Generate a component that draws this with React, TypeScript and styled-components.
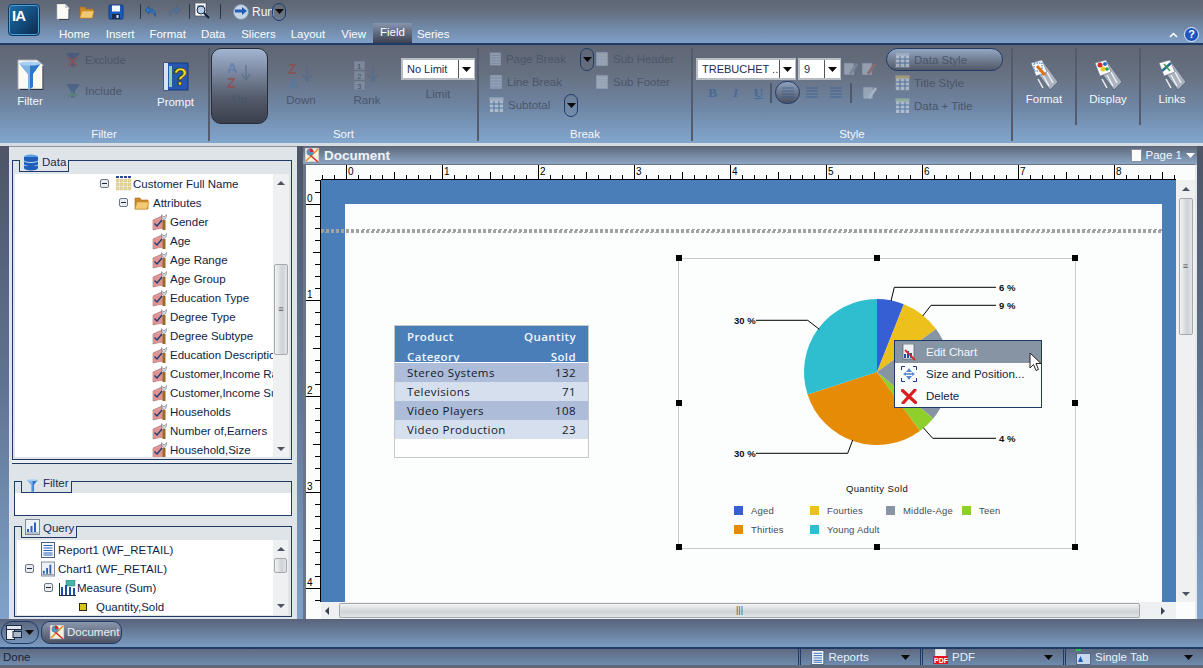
import React from 'react';
import styled, { createGlobalStyle } from 'styled-components';

const NAVY = '#1f3a66';
const UI_FONT = '"Liberation Sans", Arial, sans-serif';

const GlobalStyle = createGlobalStyle`
  html, body { margin: 0; padding: 0; background: #5f6878; }
  body { font-family: ${UI_FONT}; font-size: 11.5px; }
  * { box-sizing: border-box; }
`;

/* ---------- icons ---------- */
type IconProps = { size?: number };

const PageIcon = () => (
  <svg width="14" height="16" viewBox="0 0 14 16">
    <path d="M1 0h8l4 4v11H1z" fill="#fbfbf6" stroke="#b9bcc0" strokeWidth=".6" />
    <path d="M9 0v4h4z" fill="#c9ccd2" />
    <path d="M13 5v10.500H3" stroke="#3b4454" fill="none" />
  </svg>
);
const FolderIcon = ({ size = 16 }: IconProps) => (
  <svg width={size} height={size} viewBox="0 0 16 16">
    <path d="M1 3h5l1 2h7v9H1z" fill="#c98a2c" stroke="#a56c1c" strokeWidth=".6" />
    <path d="M1 14l2-7h12l-2 7z" fill="#f3c873" stroke="#c98a2c" strokeWidth=".6" />
  </svg>
);
const SaveIcon = () => (
  <svg width="16" height="16" viewBox="0 0 16 16">
    <rect x="1" y="1" width="14" height="14" rx="1" fill="#1a5bc0" stroke="#123c84" />
    <rect x="4" y="1.500" width="8" height="6" fill="#f4f7fb" />
    <rect x="4" y="10" width="8" height="5" fill="#1b2b4e" />
    <rect x="8.500" y="11" width="2" height="3" fill="#dfe6f0" />
  </svg>
);
const UndoIcon = ({ flip, dim }: { flip?: boolean; dim?: boolean }) => (
  <svg width="14" height="14" viewBox="0 0 14 14" opacity={dim ? 0.3 : 1} transform={flip ? 'scale(-1 1)' : undefined}>
    <path d="M5 1L1 5l4 4V6.500c3 0 5 1 6 5 1.500-4 0-7.500-6-7.500z" fill="#2b78c8" stroke="#123c84" strokeWidth=".5" />
  </svg>
);
const PreviewIcon = () => (
  <svg width="17" height="17" viewBox="0 0 17 17">
    <rect x="1" y="0" width="11" height="13" fill="#fff" stroke="#3d4656" strokeWidth=".7" />
    <path d="M3 3h7M3 5h7M3 7h7M3 9h7" stroke="#2a5ba8" />
    <circle cx="7" cy="7" r="4" fill="#cfe2f6" fillOpacity=".6" stroke="#10213f" />
    <path d="M10 10l5 5" stroke="#10213f" strokeWidth="2" />
  </svg>
);
const RunIcon = () => (
  <svg width="16" height="16" viewBox="0 0 16 16">
    <circle cx="8" cy="8" r="7.500" fill="#c6d5e6" stroke="#7f93ac" />
    <path d="M2 5.500h7V3l5 4-5 4V8.500H2z" fill="#1f5db8" />
  </svg>
);
const Caret = ({ color = '#0a0a0a' }: { color?: string }) => (
  <svg width="9" height="5" viewBox="0 0 9 5"><path d="M0 0h9L4.500 5z" fill={color} /></svg>
);
const FunnelPath = () => (
  <>
    <path d="M2 4h22l-8 11v13l-5 3V15z" fill="#2f77c7" />
    <path d="M2 4h11v27l-2-.500V15z" fill="#7fb3e6" />
    <ellipse cx="13" cy="4.500" rx="11" ry="2" fill="#a9d0f2" />
  </>
);
const BigFilterIcon = () => (
  <svg width="27" height="31" viewBox="0 0 27 31">
    <path d="M1 1h19l6 5v24H1z" fill="#fbfbf2" stroke="#a9adb4" />
    <path d="M26 7v23.500H3" stroke="#2c3340" fill="none" />
    <FunnelPath />
  </svg>
);
const SmallFunnel = ({ size = 16 }: IconProps) => (
  <svg width={size} height={size} viewBox="0 0 26 32"><FunnelPath /></svg>
);
const ExcludeIcon = ({ cross }: { cross?: boolean }) => (
  <svg width="16" height="16" viewBox="0 0 16 16" opacity=".38">
    <path d="M1 1h14l-5 7v6l-4 1V8z" fill="#24467a" />
    {cross
      ? <path d="M3 5l9 9M12 5l-9 9" stroke="#c0322c" strokeWidth="2" />
      : <path d="M3 15l4-5 4 5M2 12h11" stroke="#3f8a46" strokeWidth="1.500" fill="none" />}
  </svg>
);
const PromptIcon = () => (
  <svg width="26" height="29" viewBox="0 0 26 29">
    <rect x="1" y="1" width="24" height="27" fill="#2457ad" stroke="#143b7e" />
    <rect x="1" y="1" width="4" height="27" fill="#d9e2ee" />
    <rect x="6" y="4" width="3" height="21" fill="#8fd0a0" />
    <text x="10" y="23" fontSize="24" fontWeight="700" fontFamily={UI_FONT} fill="#f2dd2c" stroke="#1c1c10" strokeWidth=".7">?</text>
  </svg>
);
const SortAZ = ({ flip }: { flip?: boolean }) => (
  <svg width="26" height="30" viewBox="0 0 26 30" opacity=".6">
    <text x="0" y="13" fontSize="14" fontWeight="700" fontFamily={UI_FONT} fill={flip ? '#a1413c' : '#4f79ad'}>{flip ? 'Z' : 'A'}</text>
    <text x="0" y="28" fontSize="14" fontWeight="700" fontFamily={UI_FONT} fill={flip ? '#4f79ad' : '#a1413c'}>{flip ? 'A' : 'Z'}</text>
    <path d="M19 5v14M15 14l4 6 4-6" stroke="#4f6a8a" strokeWidth="1.500" fill="none" />
  </svg>
);
const RankIcon = () => (
  <svg width="26" height="30" viewBox="0 0 26 30" opacity=".6">
    {[1, 2, 3].map((n, i) => (
      <g key={n}>
        <rect x="0" y={i * 10} width="11" height="9" fill="#8e9aae" stroke="#5f6b7e" strokeWidth=".5" />
        <text x="3" y={i * 10 + 8} fontSize="8" fontFamily={UI_FONT} fill="#2e3a50">{n}</text>
      </g>
    ))}
    <path d="M19 5v14M15 14l4 6 4-6" stroke="#4f6a8a" strokeWidth="1.500" fill="none" />
  </svg>
);
const RowsIcon = ({ tint = '#8ba3c0' }: { tint?: string }) => (
  <svg width="14" height="16" viewBox="0 0 14 16" opacity=".55">
    <rect x="1" y="1" width="12" height="14" fill="#b8c6d8" stroke="#6d82a0" strokeWidth=".6" />
    <path d="M2 4h10M2 7h10M2 10h10M2 13h10" stroke={tint} />
  </svg>
);
const GridStyleIcon = ({ head }: { head: string }) => (
  <svg width="15" height="16" viewBox="0 0 15 16" opacity=".6">
    <rect x=".5" y=".5" width="14" height="15" fill="#d8dfe8" stroke="#7b8aa0" />
    <rect x=".5" y=".5" width="14" height="3" fill={head} />
    <path d="M1 7h13M1 11h13M5 4v11M10 4v11" stroke="#3f6a9f" />
  </svg>
);
const ToolIcon = ({ tint }: { tint: string }) => (
  <svg width="16" height="16" viewBox="0 0 16 16" opacity=".55">
    <rect x="1" y="2" width="10" height="12" fill="#b9c6d6" stroke="#6d7f98" strokeWidth=".6" />
    <path d="M8 14l7-10-2-2-7 10z" fill={tint} />
  </svg>
);
const AlignIcon = () => (
  <svg width="14" height="14" viewBox="0 0 14 14" opacity=".55">
    <path d="M1 2h12M1 5h12M1 8h12M1 11h12" stroke="#27558f" strokeWidth="1.200" />
  </svg>
);
const ChartBookIcon = ({ variant }: { variant: 'format' | 'display' | 'links' }) => (
  <svg width="32" height="33" viewBox="0 0 32 33">
    <path d="M4 8l10-6 16 22-8 8z" fill="#aab2bf" stroke="#4c5666" strokeWidth=".7" />
    <path d="M10 21l5 9M15 17l6 11M19 14l6 11" stroke="#eef1f5" strokeWidth="1.500" />
    <path d="M3 5l11-3 5 12-11 4z" fill="#fbfbfb" stroke="#6a7484" strokeWidth=".6" />
    {variant === 'format' && <><rect x="6" y="5" width="8" height="8" fill="none" stroke="#2c6cc0" strokeDasharray="1.500 1" /><path d="M9 8l8 9" stroke="#d9741c" strokeWidth="3" /></>}
    {variant === 'display' && <><circle cx="8" cy="7" r="2.500" fill="#d42a2a" /><circle cx="13" cy="6" r="2" fill="#2c6cc0" /><circle cx="11" cy="11" r="2.500" fill="#e6cc2a" /><circle cx="15" cy="11" r="1.800" fill="#2f9a46" /></>}
    {variant === 'links' && <><path d="M6 13l9-8" stroke="#2d6f92" strokeWidth="2.500" /><path d="M8 6l6 7" stroke="#3d9a4e" strokeWidth="1.500" /></>}
  </svg>
);
const DocumentIcon = ({ size = 16 }: IconProps) => (
  <svg width={size} height={size} viewBox="0 0 16 16">
    <rect x="1" y="1" width="14" height="14" fill="#f7f1df" stroke="#8a8f99" strokeWidth=".6" />
    <path d="M2 14L14 2" stroke="#e08a1c" strokeWidth="1.500" />
    <path d="M5 7l9 8" stroke="#d42a2a" strokeWidth="1.500" />
    <circle cx="6" cy="5" r="3.500" fill="#5a8fb8" />
    <path d="M6 5V1.500A3.500 3.500 0 0 1 9.500 5z" fill="#d42a2a" />
  </svg>
);
const ReportIcon = ({ size = 16 }: IconProps) => (
  <svg width={size * 0.9} height={size} viewBox="0 0 14 16">
    <rect x=".5" y=".5" width="13" height="15" fill="#f5f8fb" stroke="#50627e" />
    <path d="M2.500 3.500h9M2.500 6h9M2.500 8.500h9M2.500 11h9M2.500 13h9" stroke="#2a62bb" />
  </svg>
);
const BarsPageIcon = () => (
  <svg width="15" height="16" viewBox="0 0 15 16">
    <rect x=".5" y=".5" width="14" height="15" fill="#eef2f7" stroke="#7d8896" />
    <path d="M3 13V10M6.500 13V7M10 13V3.500" stroke="#2a62bb" strokeWidth="2" />
    <path d="M1.500 14h12" stroke="#7d8896" />
  </svg>
);
const MeasureIcon = () => (
  <svg width="17" height="16" viewBox="0 0 17 16">
    <rect x="7" y="0" width="9" height="6" fill="#49b5a8" stroke="#237a70" strokeWidth=".5" />
    <path d="M2 15V7h2v8zM6 15V5h2v10zM10 15V7h2v8zM14 15V8h2v7z" fill="#1b4fa5" />
    <path d="M0 15.500h17M.5 3v13" stroke="#1c2a44" />
  </svg>
);
const AttrIcon = () => (
  <svg width="17" height="18" viewBox="0 0 17 18">
    <path d="M1 7l9-4v12l-9 2z" fill="#e39a9a" stroke="#8a5757" strokeWidth=".5" />
    <path d="M1 7h12v9H1z" fill="#dd9090" opacity=".85" />
    <path d="M2.500 10.500l2.500 2.500 5-6" stroke="#1d3a78" strokeWidth="1.300" fill="none" />
    <path d="M12 7v10" stroke="#9a6a26" strokeWidth="3" />
    <path d="M9.500 1.500c0 3 1 5 2.500 5s2.500-2 2.500-5l-1.500 2h-2z" fill="#d9dde3" stroke="#5f6672" strokeWidth=".5" />
  </svg>
);
const GridDimIcon = () => (
  <svg width="16" height="15" viewBox="0 0 16 15">
    {[0, 1, 2, 3].map((r) => [0, 1, 2, 3].map((c) => (
      <rect key={`${r}${c}`} x={c * 4} y={r * 4 - 1} width="3" height="3" fill={r === 0 ? '#2a4a8f' : '#e7d9a2'} stroke={r === 0 ? 'none' : '#c7b676'} strokeWidth=".4" />
    )))}
  </svg>
);
const EditChartIcon = () => (
  <svg width="16" height="17" viewBox="0 0 16 17">
    <rect x="2" y="0" width="11" height="15" fill="#eef1f5" stroke="#555e6e" strokeWidth=".7" />
    <path d="M4 14V10M7 14V7M10 14V9" stroke="#1d4fa0" strokeWidth="2" />
    <path d="M4 6l10 10" stroke="#d42a2a" strokeWidth="1.800" />
  </svg>
);
const SizeIcon = () => (
  <svg width="16" height="16" viewBox="0 0 16 16">
    <path d="M.5 4V.5H4M12 .5h3.500V4M.5 12v3.500H4M12 15.500h3.500V12" stroke="#143b8e" fill="none" />
    <path d="M8 2l3 4H5zM8 14l3-4H5zM2 8l3-2v4zM14 8l-3-2v4z" fill="#5a86d6" />
    <path d="M5 8h6" stroke="#143b8e" />
  </svg>
);
const DeleteIcon = () => (
  <svg width="16" height="15" viewBox="0 0 16 15">
    <path d="M1.500 1.500L14.500 13.500M14 1L2 14" stroke="#d81e1e" strokeWidth="3.200" strokeLinecap="round" />
  </svg>
);
const PointerIcon = () => (
  <svg width="13" height="20" viewBox="0 0 13 20">
    <path d="M1 1v15l3.500-3.500 2.500 6 2.500-1-2.500-6h5z" fill="#fff" stroke="#222" />
  </svg>
);
const WindowsIcon = () => (
  <svg width="16" height="15" viewBox="0 0 16 15">
    <rect x=".5" y=".5" width="15" height="4" fill="#dfe6ef" stroke="#1c2a44" />
    <rect x=".5" y="4.500" width="8" height="10" fill="#f3f5f8" stroke="#1c2a44" />
    <rect x="7" y="6.500" width="8.500" height="6" fill="#aab7c9" stroke="#1c2a44" />
  </svg>
);
const PdfIcon = () => (
  <svg width="15" height="16" viewBox="0 0 15 16">
    <rect x="2" y="0" width="11" height="15" fill="#f0f0f0" stroke="#8a8f99" strokeWidth=".5" />
    <rect x="0" y="7" width="15" height="8" fill="#e0141c" />
    <text x="1" y="14" fontSize="7" fontWeight="700" fontFamily={UI_FONT} fill="#fff">PDF</text>
  </svg>
);
const TabWinIcon = () => (
  <svg width="15" height="16" viewBox="0 0 15 16">
    <rect x="0" y="0" width="5" height="2" fill="#28c840" />
    <rect x=".5" y="4.500" width="14" height="11" fill="#c7d7ec" stroke="#56698a" />
    <path d="M2 13l2.500-6 2.500 6z" fill="#1f5db8" />
  </svg>
);

/* ---------- shell ---------- */
const Screen = styled.div`
  width: 1203px;
  height: 668px;
  overflow: hidden;
  display: flex;
  flex-direction: column;
  color: #0c1a3a;
`;

const TopBar = styled.div`
  height: 43px;
  position: relative;
  display: flex;
  background: linear-gradient(#5e6573 0, #667081 30%, #6f86a4 60%, #7fa0c6 100%);
`;

const LogoBox = styled.div`
  width: 32px;
  height: 32px;
  margin: 4px 0 0 8px;
  border-radius: 4px;
  border: 1px solid #0d3a66;
  background: linear-gradient(135deg, #1f6fa8 0, #124a7a 55%, #0e2a4a 100%);
  color: #fff;
  font-weight: 700;
  font-size: 15px;
  letter-spacing: -1px;
  padding: 2px 0 0 3px;
  box-shadow: inset 0 0 0 1px #4d9fd4;
`;

const TopStack = styled.div`
  flex: 1;
  display: flex;
  flex-direction: column;
  padding-left: 14px;
`;

const QuickBar = styled.div`
  height: 27px;
  display: flex;
  align-items: center;
  padding-bottom: 4px;
`;

const Quick = styled.span<{ $w: number }>`
  width: ${(p) => p.$w}px;
  display: flex;
  justify-content: center;
  flex-shrink: 0;
`;

const QuickSep = styled.span<{ $mr: number }>`
  width: 1px;
  height: 15px;
  background: #2e3442;
  margin: 0 ${(p) => p.$mr}px 0 0;
  flex-shrink: 0;
`;

const RunLabel = styled.span`
  color: #f5f7fa;
  font-size: 12px;
  width: 20px;
  margin-left: 3px;
`;

const PillArrow = styled.span<{ $h?: number }>`
  width: 14px;
  height: ${(p) => p.$h ?? 23}px;
  border: 1px solid ${NAVY};
  border-radius: 7px;
  display: flex;
  align-items: center;
  justify-content: center;
  flex-shrink: 0;
`;

const TabRow = styled.div`
  height: 16px;
  display: flex;
  align-items: center;
  padding-left: 0;
`;

const MenuTab = styled.div<{ $active?: boolean; $ml: number }>`
  margin-left: ${(p) => p.$ml}px;
  height: 20px;
  margin-top: -4px;
  padding: 0 7px;
  line-height: 19px;
  font-size: 11.5px;
  color: #fbfcfe;
  background: ${(p) => (p.$active ? 'linear-gradient(#8694ad, #3d4252)' : 'transparent')};
  ${(p) => (p.$active ? '' : 'padding: 0; margin-top: 0;')}
`;

const TopRight = styled.div`
  position: absolute;
  right: 4px;
  bottom: 1px;
  display: flex;
  align-items: center;
  gap: 6px;
  color: #fff;
`;

const HelpDot = styled.span`
  width: 15px;
  height: 15px;
  border-radius: 50%;
  background: #1d54c0;
  border: 1px solid #e8eef8;
  color: #fff;
  font-weight: 700;
  font-size: 11px;
  line-height: 13px;
  text-align: center;
`;

const NavyLine = styled.div`
  height: 2px;
  background: ${NAVY};
`;

/* ---------- ribbon ---------- */
const Ribbon = styled.div`
  height: 98px;
  display: flex;
  padding-top: 3px;
  background: linear-gradient(#5f6675 0, #677081 30%, #6f87a6 65%, #82a6cd 100%);
`;

const Section = styled.div<{ $w: number; $short?: boolean }>`
  width: ${(p) => p.$w}px;
  flex-shrink: 0;
  display: flex;
  flex-direction: column;
  height: ${(p) => (p.$short ? 77 : 93)}px;
  border-right: 2px solid #545b6c;
  &:last-child { border-right: none; }
`;

const SectionBody = styled.div`
  height: 78px;
  display: flex;
  position: relative;
`;

const SectionLabel = styled.div`
  text-align: center;
  color: #f3f6fb;
  font-size: 11.5px;
  line-height: 14px;
  margin-top: 2px;
`;

const BigButton = styled.div<{ $w: number; $ml?: number; $top: number; $off?: boolean; $gap?: number }>`
  width: ${(p) => p.$w}px;
  margin-left: ${(p) => p.$ml ?? 0}px;
  padding-top: ${(p) => p.$top}px;
  display: flex;
  flex-direction: column;
  align-items: center;
  gap: ${(p) => p.$gap ?? 5}px;
  font-size: 11.5px;
  color: ${(p) => (p.$off ? '#4b5568' : '#f5f7fb')};
  flex-shrink: 0;
`;

const PressedButton = styled(BigButton)`
  height: 76px;
  border-radius: 10px;
  border: 1px solid #272d3a;
  background: linear-gradient(#a3b5d2 0, #7e8ba3 30%, #555c6c 65%, #3a3f4b 100%);
`;

const SmallCol = styled.div<{ $ml: number; $w: number; $top?: number; $gap: number }>`
  margin-left: ${(p) => p.$ml}px;
  width: ${(p) => p.$w}px;
  padding-top: ${(p) => p.$top ?? 3}px;
  display: flex;
  flex-direction: column;
  gap: ${(p) => p.$gap}px;
  flex-shrink: 0;
`;

const SmallItem = styled.div`
  display: flex;
  align-items: center;
  gap: 4px;
  height: 16px;
  font-size: 11.5px;
  color: #4b5568;
  white-space: nowrap;
`;

const PillSlot = styled.span<{ $ml: number }>`
  margin-left: ${(p) => p.$ml}px;
  display: inline-flex;
`;

const SelectBox = styled.div<{ $w: number }>`
  width: ${(p) => p.$w}px;
  height: 22px;
  border: 2px solid #b8bdc4;
  border-right-width: 1px;
  background: #fff;
  display: flex;
  align-items: center;
  font-size: 11px;
  color: #1a2a55;
  flex-shrink: 0;
`;

const SelectText = styled.span`
  flex: 1;
  padding-left: 4px;
  white-space: nowrap;
  overflow: hidden;
`;

const SelectArrow = styled.span`
  width: 16px;
  height: 100%;
  border-left: 1px solid #555;
  display: flex;
  align-items: center;
  justify-content: center;
`;

const StyleColumn = styled.div`
  width: 190px;
  margin-left: 3px;
  padding-top: 10px;
  flex-shrink: 0;
`;

const StyleRow = styled.div<{ $gap?: number; $mt?: number }>`
  display: flex;
  align-items: center;
  gap: ${(p) => p.$gap ?? 2}px;
  margin-top: ${(p) => p.$mt ?? 0}px;
`;

const FontGlyph = styled.span<{ $italic?: boolean; $under?: boolean }>`
  width: 23px;
  text-align: center;
  font-family: "Liberation Serif", serif;
  font-weight: 700;
  font-size: 13px;
  color: #3f6596;
  opacity: .8;
  font-style: ${(p) => (p.$italic ? 'italic' : 'normal')};
  text-decoration: ${(p) => (p.$under ? 'underline' : 'none')};
`;

const VSep = styled.span`
  width: 2px;
  height: 20px;
  background: #4f5768;
`;

const AlignPressed = styled.span`
  width: 25px;
  height: 23px;
  border-radius: 12px;
  border: 1px solid ${NAVY};
  background: linear-gradient(#8ea1bd, #4a5060);
  display: flex;
  align-items: center;
  justify-content: center;
`;

const AlignSlot = styled.span`
  width: 24px;
  display: flex;
  justify-content: center;
`;

const StylePicks = styled.div`
  width: 117px;
  flex-shrink: 0;
  display: flex;
  flex-direction: column;
`;

const StylePick = styled.div<{ $on?: boolean }>`
  height: 23px;
  display: flex;
  align-items: center;
  gap: 4px;
  padding-left: 8px;
  border-radius: 12px;
  font-size: 11.5px;
  color: #4b5568;
  border: 1px solid ${(p) => (p.$on ? NAVY : 'transparent')};
  background: ${(p) => (p.$on ? 'linear-gradient(#93a6c2, #525968)' : 'transparent')};
`;

/* ---------- workspace ---------- */
const Workspace = styled.div`
  height: 476px;
  display: flex;
  gap: 6px;
  padding: 0 6px 0 9px;
  border-top: 3px solid #d5dce2;
  background: linear-gradient(#4d5566 0, #5f7390 50%, #80a2ca 100%);
`;

const LeftPanel = styled.div`
  width: 288px;
  background: #dfe4e8;
  border-top: 1px solid #8d95a0;
  display: flex;
  flex-direction: column;
  padding: 13px 5px 0 3px;
`;

const Group = styled.div<{ $h: number; $shadow?: boolean }>`
  height: ${(p) => p.$h}px;
  border: 1px solid ${NAVY};
  display: flex;
  flex-direction: column;
  flex-shrink: 0;
  ${(p) => (p.$shadow ? 'box-shadow: 0 3px 0 #eef1f3, 0 4px 0 #1f3a66;' : '')}
`;

const GroupTab = styled.div<{ $w: number }>`
  width: ${(p) => p.$w}px;
  height: 12px;
  margin: -1px 0 0 6px;
  border: 1px solid ${NAVY};
  border-top: none;
  background: #dfe4e8;
  display: flex;
  align-items: flex-end;
  gap: 3px;
  padding: 0 0 0 3px;
  line-height: 14px;
  flex-shrink: 0;
  font-size: 11.5px;
  color: #1a2a55;
  white-space: nowrap;
`;

const TreeArea = styled.div`
  flex: 1;
  display: flex;
  min-height: 0;
  margin: 2px;
  background: #fff;
  overflow: hidden;
`;

const TreeRows = styled.div`
  flex: 1;
  overflow: hidden;
`;

const TreeRow = styled.div<{ $pad: number }>`
  height: 19px;
  padding-left: ${(p) => p.$pad}px;
  display: flex;
  align-items: center;
  white-space: nowrap;
  color: #101d45;
  font-size: 11.5px;
`;

const Expander = styled.span<{ $mr: number }>`
  width: 9px;
  height: 9px;
  border: 1px solid #6d7787;
  border-radius: 2px;
  background: #e9edf0;
  margin-right: ${(p) => p.$mr}px;
  display: flex;
  align-items: center;
  justify-content: center;
  flex-shrink: 0;
  &::after { content: ''; width: 5px; height: 1px; background: #20283a; }
`;

const RowIcon = styled.span<{ $w: number; $mr: number }>`
  width: ${(p) => p.$w}px;
  margin-right: ${(p) => p.$mr}px;
  display: flex;
  justify-content: center;
  flex-shrink: 0;
`;

const ScrollV = styled.div<{ $w?: number }>`
  width: ${(p) => p.$w ?? 16}px;
  background: #eef0f1;
  display: flex;
  flex-direction: column;
  align-items: center;
  flex-shrink: 0;
`;

const ArrowBtn = styled.div<{ $h?: number }>`
  height: ${(p) => p.$h ?? 17}px;
  flex-shrink: 0;
  display: flex;
  align-items: center;
  justify-content: center;
`;

const UpTri = styled.span`
  width: 0;
  height: 0;
  border-left: 4px solid transparent;
  border-right: 4px solid transparent;
  border-bottom: 4px solid #4b5362;
`;

const DownTri = styled(UpTri)`
  border-bottom: none;
  border-top: 4px solid #4b5362;
`;

const LeftTri = styled.span`
  width: 0;
  height: 0;
  border-top: 4px solid transparent;
  border-bottom: 4px solid transparent;
  border-right: 4px solid #3a4150;
`;

const RightTri = styled(LeftTri)`
  border-right: none;
  border-left: 4px solid #3a4150;
`;

const ThumbV = styled.div<{ $h: number; $top: number }>`
  width: calc(100% - 2px);
  height: ${(p) => p.$h}px;
  margin-top: ${(p) => p.$top}px;
  flex-shrink: 0;
  border: 1px solid #a3a9ae;
  border-radius: 2px;
  background: linear-gradient(90deg, #f2f3f4, #cfd3d6 60%, #e2e4e6);
  display: flex;
  align-items: center;
  justify-content: center;
  color: #555;
  font-size: 9px;
  line-height: 1;
`;

const TrackFill = styled.div`
  flex: 1;
`;

const DocPane = styled.div`
  flex: 1;
  display: flex;
  flex-direction: column;
  min-width: 0;
`;

const PaneTitle = styled.div`
  height: 18px;
  display: flex;
  align-items: center;
  padding: 0 2px 0 1px;
  gap: 4px;
  background: linear-gradient(#5c6678, #8ca6c4);
  color: #eef3fa;
`;

const PaneName = styled.span`
  flex: 1;
  font-weight: 700;
  font-size: 13.5px;
`;

const PagePicker = styled.span`
  display: flex;
  align-items: center;
  gap: 4px;
  font-size: 11.5px;
  color: #f3f6fa;
`;

const MiniPage = styled.span`
  width: 11px;
  height: 13px;
  background: #fbfbfb;
  border: 1px solid #8a919c;
`;

const PaneFrame = styled.div`
  flex: 1;
  border: 3px solid #6c7584;
  border-top-width: 1px;
  border-bottom: none;
  border-right: 2px solid #e6e9ec;
  background: #fbfdfc;
  display: grid;
  grid-template-columns: 15px 1fr 19px;
  grid-template-rows: 15px 1fr 17px;
  min-height: 0;
`;

const RulerCell = styled.div`
  overflow: hidden;
  background: #fbfdfc;
`;

const Canvas = styled.div`
  position: relative;
  overflow: hidden;
  background: #4a7eb8;
  padding: 24px 14px 0 24px;
  min-height: 0;
`;

const ReportPage = styled.div`
  position: relative;
  height: 100%;
  background: #fcfefd;
`;

const PageBreak = styled.div`
  position: absolute;
  left: 0;
  top: 49px;
  width: 842px;
  height: 4px;
  background: repeating-linear-gradient(100deg, #a0a2a4 0 3px, transparent 3px 5px);
`;

const TableCard = styled.div`
  position: absolute;
  left: 49px;
  top: 121px;
  width: 195px;
  height: 133px;
  border: 1px solid #c6c8c8;
  background: #fdfefd;
  font-family: "Open Sans", "Liberation Sans", sans-serif;
  font-size: 11.5px;
  letter-spacing: .4px;
`;

const HeadBlock = styled.div`
  height: 37px;
  background: #4a7eb8;
  color: #f0f5fb;
  font-weight: 600;
  border-bottom: 1px solid #fff;
  overflow: hidden;
`;

const TableRow = styled.div<{ $bg?: string; $h?: number }>`
  height: ${(p) => p.$h ?? 19}px;
  padding: 0 12px;
  display: flex;
  align-items: center;
  justify-content: space-between;
  background: ${(p) => p.$bg ?? 'transparent'};
  color: #111a2c;
`;

const ChartBox = styled.div`
  position: absolute;
  left: 333px;
  top: 54px;
  width: 398px;
  height: 291px;
  border: 1px solid #c8cbc9;
`;

const Handle = styled.span<{ $x: number; $y: number }>`
  position: absolute;
  width: 6px;
  height: 6px;
  background: #000;
  left: ${(p) => p.$x}%;
  top: ${(p) => p.$y}%;
  margin: -4px 0 0 -3px;
`;

const ContextMenu = styled.div`
  position: absolute;
  left: 215px;
  top: 81px;
  width: 148px;
  border: 1px solid ${NAVY};
  background: #fbfdfc;
`;

const MenuItem = styled.div<{ $on?: boolean }>`
  height: 22px;
  display: flex;
  align-items: center;
  gap: 9px;
  padding-left: 6px;
  font-size: 11.5px;
  color: ${(p) => (p.$on ? '#f5f7fa' : '#101d45')};
  background: ${(p) => (p.$on ? '#8694a3' : 'transparent')};
`;

const Pointer = styled.div`
  position: absolute;
  right: -1px;
  top: 11px;
  line-height: 0;
`;

const ScrollH = styled.div`
  display: flex;
  align-items: center;
  background: #eef0f1;
  height: 17px;
`;

const ThumbH = styled.div`
  width: 801px;
  height: 15px;
  margin-left: 6px;
  border: 1px solid #a3a9ae;
  border-radius: 2px;
  background: linear-gradient(#f2f3f4, #cfd3d6 60%, #e2e4e6);
  text-align: center;
  color: #555;
  font-size: 9px;
  line-height: 12px;
`;

/* ---------- bottom bars ---------- */
const DocTabs = styled.div`
  height: 28px;
  display: flex;
  align-items: center;
  gap: 2px;
  padding: 0 0 2px 1px;
  background: linear-gradient(#59637a, #7a9cc2);
`;

const WinPicker = styled.div`
  width: 38px;
  height: 23px;
  border: 1px solid ${NAVY};
  border-radius: 11px;
  display: flex;
  align-items: center;
  justify-content: center;
  gap: 3px;
`;

const DocPill = styled.div`
  width: 81px;
  height: 23px;
  border: 1px solid ${NAVY};
  border-radius: 9px;
  display: flex;
  align-items: center;
  gap: 2px;
  padding-left: 7px;
  background: linear-gradient(#8a97ad, #4b5262);
  color: #e9eef5;
  font-size: 11.5px;
`;

const StatusBar = styled.div`
  height: 18px;
  display: flex;
  border-top: 2px solid ${NAVY};
  background: linear-gradient(#5f6a80, #6d8bae);
`;

const StatusText = styled.div`
  flex: 1;
  padding-left: 3px;
  line-height: 16px;
  font-size: 11.5px;
  color: #16233a;
`;

const StatusPick = styled.div<{ $w: number }>`
  width: ${(p) => p.$w}px;
  border-left: 3px double ${NAVY};
  display: flex;
  align-items: center;
  gap: 4px;
  padding: 0 10px 0 10px;
  font-size: 11.5px;
  color: #eaf0f7;
`;

const StatusName = styled.span`
  flex: 1;
`;

/* ---------- drawings ---------- */
const HRuler = () => {
  const ticks = Array.from({ length: 72 }, (_, i) => i);
  return (
    <svg width="860" height="15" viewBox="0 0 860 15">
      <path d="M0 14.500h860" stroke="#000" />
      {ticks.map((i) => {
        const x = 1 + i * 12;
        const major = (i - 2) % 8 === 0;
        const half = (i - 2) % 4 === 0;
        return <path key={i} d={`M${x + 0.5} ${major ? 0 : half ? 7 : 10}V14`} stroke="#000" />;
      })}
      {[0, 1, 2, 3, 4, 5, 6, 7, 8].map((n) => (
        <text key={n} x={27 + n * 96} y="10" fontSize="10" fontFamily={UI_FONT}>{n}</text>
      ))}
    </svg>
  );
};

const VRuler = () => {
  const ticks = Array.from({ length: 36 }, (_, i) => i);
  return (
    <svg width="15" height="424" viewBox="0 0 15 424">
      <path d="M14.500 0v424" stroke="#000" />
      {ticks.map((i) => {
        const y = i * 12;
        const major = i % 8 === 2;
        const half = i % 4 === 2;
        return <path key={i} d={`M${major ? 0 : half ? 7 : 9} ${y + 0.5}H14`} stroke="#000" />;
      })}
      {[0, 1, 2, 3, 4].map((n) => (
        <text key={n} x="1" y={22 + n * 96} fontSize="10" fontFamily={UI_FONT}>{n}</text>
      ))}
    </svg>
  );
};

const slices = [
  { name: 'Aged', pct: 6, color: '#355fd3', lx: 55, ly: 247 },
  { name: 'Fourties', pct: 9, color: '#edc01c', lx: 131, ly: 247 },
  { name: 'Middle-Age', pct: 21, color: '#8694a3', lx: 207, ly: 247 },
  { name: 'Teen', pct: 4, color: '#8fcf2c', lx: 283, ly: 247 },
  { name: 'Thirties', pct: 30, color: '#e58b05', lx: 55, ly: 266 },
  { name: 'Young Adult', pct: 30, color: '#2fbdd0', lx: 131, ly: 266 },
];

const leaders = [
  { d: 'M212 42L215.300 28.300H317', label: '6 %', x: 320, y: 32 },
  { d: 'M243.700 57L252 46.300H317', label: '9 %', x: 320, y: 50 },
  { d: 'M244.300 168.700L253.700 179.300H317', label: '4 %', x: 320, y: 183 },
  { d: 'M77 61.300H128.700L140.300 70.300', label: '30 %', x: 55, y: 65 },
  { d: 'M77 194.300H168.700L173.700 181', label: '30 %', x: 55, y: 198 },
];

const PieChart = () => {
  const cx = 198;
  const cy = 113;
  const r = 73;
  let acc = 0;
  const paths = slices.map((s) => {
    const a0 = (acc / 100) * 2 * Math.PI;
    acc += s.pct;
    const a1 = (acc / 100) * 2 * Math.PI;
    const large = s.pct > 50 ? 1 : 0;
    return {
      color: s.color,
      d: `M${cx} ${cy}L${cx + r * Math.sin(a0)} ${cy - r * Math.cos(a0)}A${r} ${r} 0 ${large} 1 ${cx + r * Math.sin(a1)} ${cy - r * Math.cos(a1)}Z`,
    };
  });
  return (
    <svg width="396" height="289" viewBox="0 0 396 289" fontFamily={UI_FONT}>
      {paths.map((p) => <path key={p.color} d={p.d} fill={p.color} />)}
      {leaders.map((l) => (
        <g key={l.d}>
          <path d={l.d} stroke="#000" fill="none" />
          <text x={l.x} y={l.y} fontSize="9.500" fontWeight="700" fill="#111">{l.label}</text>
        </g>
      ))}
      <text x="198" y="233" fontSize="9.500" textAnchor="middle" letterSpacing=".4" fill="#111">Quantity Sold</text>
      {slices.map((s) => (
        <g key={s.name}>
          <rect x={s.lx} y={s.ly} width="9" height="9" fill={s.color} />
          <text x={s.lx + 17} y={s.ly + 8} fontSize="9.500" letterSpacing=".2" fill="#454a55">{s.name}</text>
        </g>
      ))}
    </svg>
  );
};

const fields = [
  'Gender', 'Age', 'Age Range', 'Age Group', 'Education Type', 'Degree Type', 'Degree Subtype',
  'Education Description', 'Customer,Income Range', 'Customer,Income Subtype', 'Households',
  'Number of,Earners', 'Household,Size',
];

const handles = [
  [0, 0], [50, 0], [100, 0], [0, 50], [100, 50], [0, 100], [50, 100], [100, 100],
];

const rows = [
  { name: 'Stereo Systems', qty: 132, bg: '#adbcd9' },
  { name: 'Televisions', qty: 71, bg: '#d6dfee' },
  { name: 'Video Players', qty: 108, bg: '#adbcd9' },
  { name: 'Video Production', qty: 23, bg: '#d6dfee' },
];

const App = () => (
  <Screen>
    <GlobalStyle />
    <TopBar>
      <LogoBox>IA</LogoBox>
      <TopStack>
        <QuickBar>
          <Quick $w={17}><PageIcon /></Quick>
          <Quick $w={32}><FolderIcon /></Quick>
          <Quick $w={25}><SaveIcon /></Quick>
          <Quick $w={12} />
          <QuickSep $mr={2} />
          <Quick $w={16}><UndoIcon /></Quick>
          <Quick $w={30}><UndoIcon flip dim /></Quick>
          <QuickSep $mr={2} />
          <Quick $w={20}><PreviewIcon /></Quick>
          <Quick $w={8} />
          <QuickSep $mr={12} />
          <Quick $w={16}><RunIcon /></Quick>
          <RunLabel>Run</RunLabel>
          <PillArrow $h={18}><Caret /></PillArrow>
        </QuickBar>
        <TabRow>
          <MenuTab $ml={5}>Home</MenuTab>
          <MenuTab $ml={16}>Insert</MenuTab>
          <MenuTab $ml={15}>Format</MenuTab>
          <MenuTab $ml={15}>Data</MenuTab>
          <MenuTab $ml={16}>Slicers</MenuTab>
          <MenuTab $ml={15}>Layout</MenuTab>
          <MenuTab $ml={16}>View</MenuTab>
          <MenuTab $ml={7} $active>Field</MenuTab>
          <MenuTab $ml={5}>Series</MenuTab>
        </TabRow>
      </TopStack>
      <TopRight>
        <svg width="9" height="6" viewBox="0 0 9 6"><path d="M1 5l3.500-3.500L8 5" stroke="#fff" strokeWidth="1.500" fill="none" /></svg>
        <HelpDot>?</HelpDot>
      </TopRight>
    </TopBar>
    <NavyLine />
    <Ribbon>
      <Section $w={210}>
        <SectionBody>
          <BigButton $w={30} $ml={15} $top={11}>
            <BigFilterIcon />
            Filter
          </BigButton>
          <SmallCol $ml={20} $w={80} $top={4} $gap={15}>
            <SmallItem><ExcludeIcon cross />Exclude</SmallItem>
            <SmallItem><ExcludeIcon />Include</SmallItem>
          </SmallCol>
          <BigButton $w={37} $ml={12} $top={14}>
            <PromptIcon />
            Prompt
          </BigButton>
        </SectionBody>
        <SectionLabel>Filter</SectionLabel>
      </Section>
      <Section $w={269}>
        <SectionBody>
          <PressedButton $w={57} $ml={1} $top={11} $off $gap={3}>
            <SortAZ />
            Up
          </PressedButton>
          <BigButton $w={50} $ml={8} $top={13} $off $gap={3}>
            <SortAZ flip />
            Down
          </BigButton>
          <BigButton $w={50} $ml={16} $top={13} $off $gap={3}>
            <RankIcon />
            Rank
          </BigButton>
          <BigButton $w={74} $ml={9} $top={10} $off $gap={8}>
            <SelectBox $w={74}>
              <SelectText>No Limit</SelectText>
              <SelectArrow><Caret /></SelectArrow>
            </SelectBox>
            <span>Limit</span>
          </BigButton>
        </SectionBody>
        <SectionLabel>Sort</SectionLabel>
      </Section>
      <Section $w={214}>
        <SectionBody>
          <SmallCol $ml={10} $w={105} $gap={7}>
            <SmallItem><RowsIcon />Page Break<PillSlot $ml={10}><PillArrow><Caret /></PillArrow></PillSlot></SmallItem>
            <SmallItem><RowsIcon />Line Break</SmallItem>
            <SmallItem><GridStyleIcon head="#b8c6d8" />Subtotal<PillSlot $ml={10}><PillArrow><Caret /></PillArrow></PillSlot></SmallItem>
          </SmallCol>
          <SmallCol $ml={1} $w={85} $gap={7}>
            <SmallItem><RowsIcon tint="#cfd8e4" />Sub Header</SmallItem>
            <SmallItem><RowsIcon tint="#cfd8e4" />Sub Footer</SmallItem>
          </SmallCol>
        </SectionBody>
        <SectionLabel>Break</SectionLabel>
      </Section>
      <Section $w={320}>
        <SectionBody>
          <StyleColumn>
            <StyleRow>
              <SelectBox $w={100}>
                <SelectText>TREBUCHET ...</SelectText>
                <SelectArrow><Caret /></SelectArrow>
              </SelectBox>
              <SelectBox $w={43}>
                <SelectText>9</SelectText>
                <SelectArrow><Caret /></SelectArrow>
              </SelectBox>
              <ToolIcon tint="#8a9ab0" />
              <ToolIcon tint="#a86a66" />
            </StyleRow>
            <StyleRow $gap={0} $mt={1}>
              <FontGlyph style={{ marginLeft: 5 }}>B</FontGlyph>
              <FontGlyph $italic>I</FontGlyph>
              <FontGlyph $under>U</FontGlyph>
              <VSep />
              <AlignPressed style={{ margin: '0 0 0 3px' }}><AlignIcon /></AlignPressed>
              <AlignSlot><AlignIcon /></AlignSlot>
              <AlignSlot><AlignIcon /></AlignSlot>
              <VSep style={{ margin: '0 10px 0 2px' }} />
              <ToolIcon tint="#d8e0ea" />
            </StyleRow>
          </StyleColumn>
          <StylePicks>
            <StylePick $on><GridStyleIcon head="#a8b8cc" />Data Style</StylePick>
            <StylePick><GridStyleIcon head="#c7b676" />Title Style</StylePick>
            <StylePick><GridStyleIcon head="#a7c79a" />Data + Title</StylePick>
          </StylePicks>
        </SectionBody>
        <SectionLabel>Style</SectionLabel>
      </Section>
      <Section $w={64} $short>
        <BigButton $w={62} $top={10} $gap={2}><ChartBookIcon variant="format" />Format</BigButton>
      </Section>
      <Section $w={64} $short>
        <BigButton $w={62} $top={10} $gap={2}><ChartBookIcon variant="display" />Display</BigButton>
      </Section>
      <Section $w={62} $short>
        <BigButton $w={62} $top={10} $gap={2}><ChartBookIcon variant="links" />Links</BigButton>
      </Section>
    </Ribbon>
    <Workspace>
      <LeftPanel>
        <Group $h={300} $shadow>
          <GroupTab $w={50}>
            <svg width="16" height="17" viewBox="0 0 16 17" style={{ marginTop: -6 }}>
              <ellipse cx="8" cy="3" rx="7" ry="2.500" fill="#5aa0e0" />
              <rect x="1" y="3" width="14" height="11" fill="#1f5fb8" />
              <path d="M1 7c3 2 11 2 14 0M1 11c3 2 11 2 14 0" stroke="#bcd9f4" fill="none" />
              <ellipse cx="8" cy="14" rx="7" ry="2.500" fill="#1f5fb8" />
            </svg>
            <span style={{ marginBottom: 2 }}>Data</span>
          </GroupTab>
          <TreeArea>
            <TreeRows>
              <TreeRow $pad={85}><Expander $mr={7} /><RowIcon $w={16} $mr={1}><GridDimIcon /></RowIcon>Customer Full Name</TreeRow>
              <TreeRow $pad={104}><Expander $mr={6} /><RowIcon $w={16} $mr={3}><FolderIcon /></RowIcon>Attributes</TreeRow>
              {fields.map((f) => (
                <TreeRow $pad={137} key={f}><RowIcon $w={17} $mr={1}><AttrIcon /></RowIcon>{f}</TreeRow>
              ))}
            </TreeRows>
            <ScrollV>
              <ArrowBtn><UpTri /></ArrowBtn>
              <ThumbV $h={91} $top={73}>≡</ThumbV>
              <TrackFill />
              <ArrowBtn><DownTri /></ArrowBtn>
            </ScrollV>
          </TreeArea>
        </Group>
        <Group $h={35} style={{ marginTop: 21, marginLeft: 2 }}>
          <GroupTab $w={51}>
            <span style={{ marginTop: -9, marginBottom: -4 }}><SmallFunnel size={15} /></span>
            <span style={{ marginBottom: 2 }}>Filter</span>
          </GroupTab>
          <TreeArea style={{ margin: 0 }} />
        </Group>
        <Group $h={91} style={{ marginTop: 10, marginLeft: 2 }}>
          <GroupTab $w={56}>
            <span style={{ marginBottom: -1, marginTop: -8 }}><BarsPageIcon /></span>
            <span style={{ marginBottom: 2 }}>Query</span>
          </GroupTab>
          <TreeArea style={{ margin: '2px 3px 1px 2px' }}>
            <TreeRows>
              <TreeRow $pad={24}><RowIcon $w={14} $mr={3}><ReportIcon /></RowIcon>Report1 (WF_RETAIL)</TreeRow>
              <TreeRow $pad={8}><Expander $mr={7} /><RowIcon $w={14} $mr={3}><BarsPageIcon /></RowIcon>Chart1 (WF_RETAIL)</TreeRow>
              <TreeRow $pad={27}><Expander $mr={6} /><RowIcon $w={17} $mr={1}><MeasureIcon /></RowIcon>Measure (Sum)</TreeRow>
              <TreeRow $pad={62}><RowIcon $w={8} $mr={9}><svg width="8" height="8" viewBox="0 0 8 8"><rect x=".5" y=".5" width="7" height="7" fill="#d8c41c" stroke="#2a2a10" /></svg></RowIcon>Quantity,Sold</TreeRow>
            </TreeRows>
            <ScrollV $w={15}>
              <ArrowBtn $h={18}><UpTri /></ArrowBtn>
              <ThumbV $h={15} $top={0} />
              <TrackFill />
              <ArrowBtn $h={18}><DownTri /></ArrowBtn>
            </ScrollV>
          </TreeArea>
        </Group>
      </LeftPanel>
      <DocPane>
        <PaneTitle>
          <DocumentIcon />
          <PaneName>Document</PaneName>
          <PagePicker><MiniPage />Page 1<Caret color="#fff" /></PagePicker>
        </PaneTitle>
        <PaneFrame>
          <RulerCell />
          <RulerCell><HRuler /></RulerCell>
          <RulerCell />
          <RulerCell><VRuler /></RulerCell>
          <Canvas>
            <ReportPage>
              <TableCard>
                <HeadBlock>
                  <TableRow $h={21} style={{ color: 'inherit' }}><span>Product</span><span>Quantity</span></TableRow>
                  <TableRow $h={19} style={{ color: 'inherit' }}><span>Category</span><span>Sold</span></TableRow>
                </HeadBlock>
                {rows.map((r) => (
                  <TableRow key={r.name} $bg={r.bg}><span>{r.name}</span><span>{r.qty}</span></TableRow>
                ))}
              </TableCard>
              <ChartBox>
                <PieChart />
                {handles.map(([x, y]) => <Handle key={`${x}-${y}`} $x={x} $y={y} />)}
                <ContextMenu>
                  <MenuItem $on><EditChartIcon />Edit Chart</MenuItem>
                  <MenuItem><SizeIcon />Size and Position...</MenuItem>
                  <MenuItem><DeleteIcon />Delete</MenuItem>
                  <Pointer><PointerIcon /></Pointer>
                </ContextMenu>
              </ChartBox>
            </ReportPage>
            <PageBreak />
          </Canvas>
          <ScrollV $w={19}>
            <ArrowBtn><UpTri /></ArrowBtn>
            <ThumbV $h={137} $top={1} style={{ width: 14 }}>≡</ThumbV>
            <TrackFill />
            <ArrowBtn><DownTri /></ArrowBtn>
          </ScrollV>
          <RulerCell />
          <ScrollH>
            <ArrowBtn style={{ width: 12 }}><LeftTri /></ArrowBtn>
            <ThumbH>|||</ThumbH>
            <TrackFill />
            <ArrowBtn style={{ width: 26 }}><RightTri /></ArrowBtn>
          </ScrollH>
          <RulerCell />
        </PaneFrame>
      </DocPane>
    </Workspace>
    <DocTabs>
      <WinPicker><WindowsIcon /><Caret color="#111" /></WinPicker>
      <DocPill><DocumentIcon />Document</DocPill>
    </DocTabs>
    <StatusBar>
      <StatusText>Done</StatusText>
      <StatusPick $w={122}><ReportIcon size={15} /><StatusName>Reports</StatusName><Caret /></StatusPick>
      <StatusPick $w={143}><PdfIcon /><StatusName>PDF</StatusName><Caret /></StatusPick>
      <StatusPick $w={140}><TabWinIcon /><StatusName>Single Tab</StatusName><Caret /></StatusPick>
    </StatusBar>
  </Screen>
);

export default App;
